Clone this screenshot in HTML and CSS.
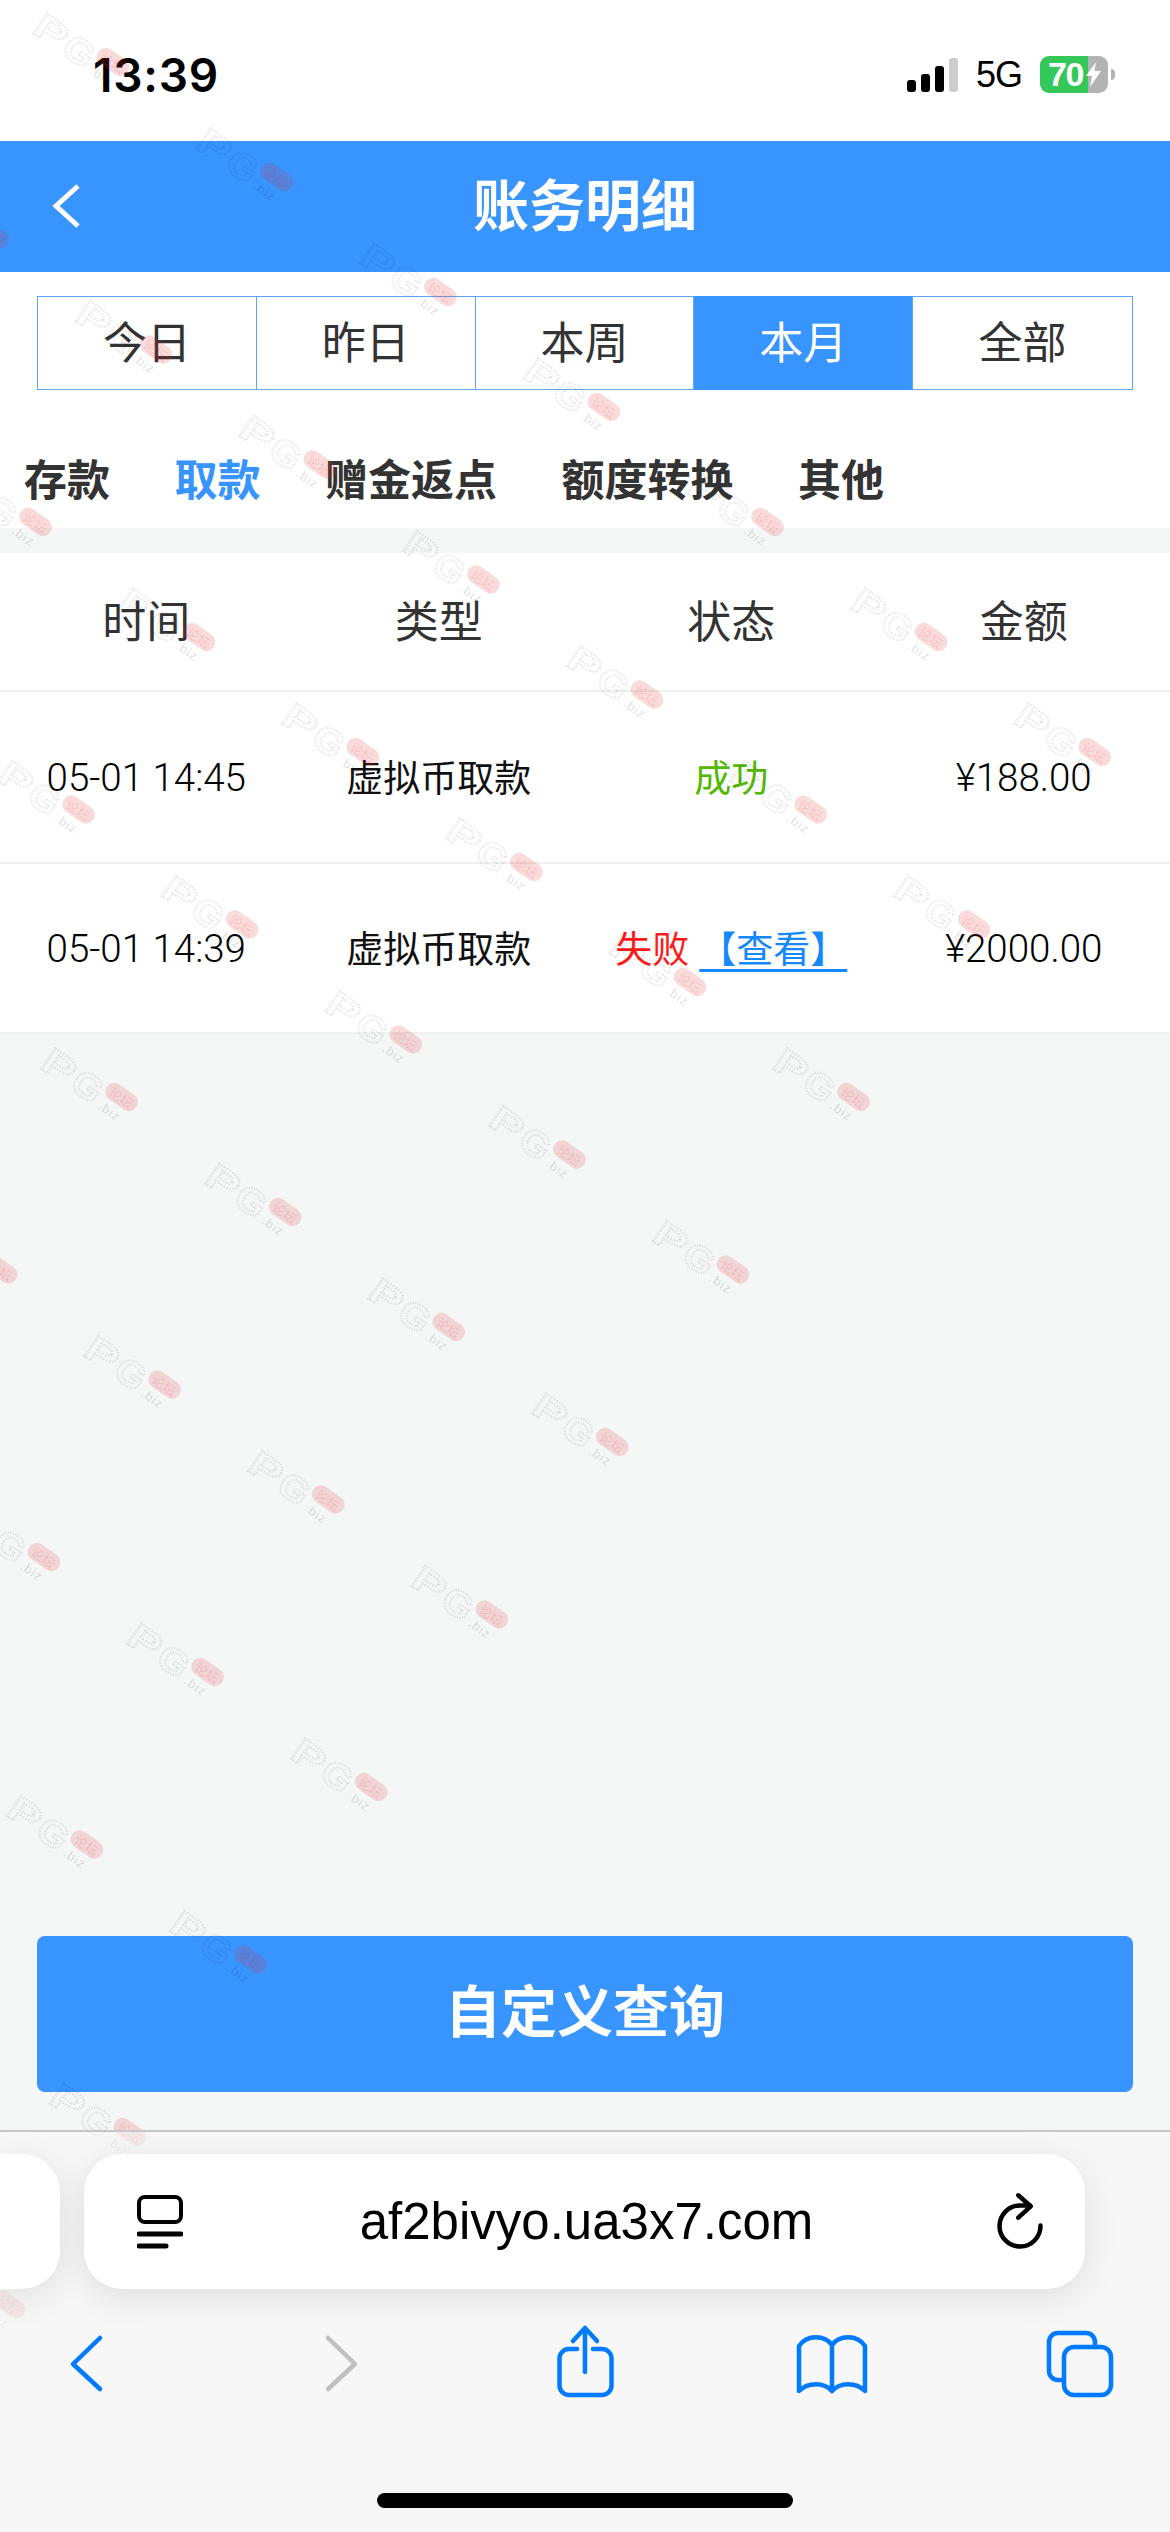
FILE: index.html
```html
<!DOCTYPE html>
<html lang="zh-CN">
<head>
    <meta charset="UTF-8">
    <meta name="viewport" content="width=device-width, initial-scale=1.0">
    <title>账务明细</title>
    <link rel="stylesheet" href="styles.css">
</head>
<body>
    <div class="status">
        <span class="time">13:39</span>
        <div class="status-right">
            <div class="signal">
                <i class="s1"></i><i class="s2"></i><i class="s3"></i><i class="s4"></i>
            </div>
            <span class="net">5G</span>
            <div class="battery">
                <span>70</span>
                <svg class="bolt" viewBox="0 0 15 25"><path d="M10 0 L0 14 H6 L4 25 L15 9 H8.5 Z"/></svg>
            </div>
            <i class="battery-cap"></i>
        </div>
    </div>

    <div class="header">
        <svg class="back" viewBox="0 0 30 46"><path d="M26 3 L4 23 L26 43"/></svg>
        <span>账务明细</span>
    </div>

    <div class="segment-wrap">
        <div class="segment">
            <div class="seg">今日</div>
            <div class="seg">昨日</div>
            <div class="seg">本周</div>
            <div class="seg active">本月</div>
            <div class="seg">全部</div>
        </div>
    </div>

    <div class="types">
        <span>存款</span>
        <span class="active">取款</span>
        <span>赠金返点</span>
        <span>额度转换</span>
        <span>其他</span>
    </div>

    <div class="table">
        <div class="row head">
            <div>时间</div><div>类型</div><div>状态</div><div>金额</div>
        </div>
        <div class="row">
            <div class="num">05-01 14:45</div>
            <div>虚拟币取款</div>
            <div class="ok">成功</div>
            <div class="num">¥188.00</div>
        </div>
        <div class="row last">
            <div class="num">05-01 14:39</div>
            <div>虚拟币取款</div>
            <div class="state"><span class="fail">失败</span><a class="view">【查看】</a></div>
            <div class="num">¥2000.00</div>
        </div>
    </div>

    <div class="query-wrap">
        <button class="query">自定义查询</button>
    </div>

    <div class="toolbar">
        <div class="url-row">
            <div class="url-side"></div>
            <div class="url-bar">
                <svg class="reader" viewBox="0 0 46 54">
                    <rect x="2" y="2" width="42" height="25" rx="6"/>
                    <path d="M2 39 H44 M2 51 H29"/>
                </svg>
                <span class="url">af2bivyo.ua3x7.com</span>
                <svg class="reload" viewBox="0 0 60 60">
                    <path d="M50.5 33.5 A20.5 20.5 0 1 1 30 13.5 H40"/>
                    <path d="M28.3 3.3 L40.7 14.3 L28.3 25.7"/>
                </svg>
            </div>
        </div>
        <div class="nav">
            <svg viewBox="0 0 80 80"><path d="M54 16 L27 42 L54 67"/></svg>
            <svg class="off" viewBox="0 0 80 80"><path d="M33 16 L60 42 L33 67"/></svg>
            <svg viewBox="-2 0 80 80">
                <path d="M32 27 H24 A9.5 9.5 0 0 0 14.5 36.500 V63.500 A9.5 9.5 0 0 0 24 73 H57 A9.500 9.500 0 0 0 66.500 63.500 V36.500 A9.500 9.500 0 0 0 57 27 H48"/>
                <path d="M40 50 V7 M28 19 L40 6 L52 19"/>
            </svg>
            <svg viewBox="0 0 80 80">
                <path d="M40 23 C33 13 15 12 7 24 V69 C16 60 32 60 40 69 C48 60 64 60 73 69 V24 C65 12 47 13 40 23 Z M40 23 V69"/>
            </svg>
            <svg viewBox="0 0 80 80">
                <path d="M55 25 V20 A9 9 0 0 0 46 11 H18 A9 9 0 0 0 9 20 V49 A9 9 0 0 0 18 58 H24"/>
                <rect x="24" y="25" width="47" height="48" rx="10"/>
            </svg>
        </div>
        <div class="home"></div>
    </div>

    <!-- watermark over the page, under the browser toolbar -->
    <svg class="marks" width="1170" height="2532">
        <defs>
            <g id="wm">
                <g transform="rotate(35)">
                    <text class="wm-letter" x="-85" y="23" textLength="33" lengthAdjust="spacingAndGlyphs">P</text>
                    <text class="wm-letter" x="-49" y="23" textLength="30" lengthAdjust="spacingAndGlyphs">G</text>
                    <rect class="wm-blob" x="-18" y="-9" width="36" height="18" rx="9"/>
                    <text class="wm-tag" x="-13" y="6">论坛</text>
                    <text class="wm-biz" x="-14" y="23">.biz</text>
                </g>
            </g>
        </defs>
        <use href="#wm" x="113.2" y="62"/>
        <use href="#wm" x="276.8" y="177"/>
        <use href="#wm" x="440.4" y="292"/>
        <use href="#wm" x="604" y="407"/>
        <use href="#wm" x="767.6" y="522"/>
        <use href="#wm" x="931.2" y="637"/>
        <use href="#wm" x="1094.8" y="752"/>

        <use href="#wm" x="-7.4" y="234.5"/>
        <use href="#wm" x="156.2" y="349.5"/>
        <use href="#wm" x="319.8" y="464.5"/>
        <use href="#wm" x="483.4" y="579.5"/>
        <use href="#wm" x="647" y="694.5"/>
        <use href="#wm" x="810.6" y="809.5"/>
        <use href="#wm" x="974.2" y="924.5"/>

        <use href="#wm" x="35.6" y="522"/>
        <use href="#wm" x="199.2" y="637"/>
        <use href="#wm" x="362.8" y="752"/>
        <use href="#wm" x="526.4" y="867"/>
        <use href="#wm" x="690" y="982"/>
        <use href="#wm" x="853.6" y="1097"/>

        <use href="#wm" x="78.6" y="809.5"/>
        <use href="#wm" x="242.2" y="924.5"/>
        <use href="#wm" x="405.8" y="1039.5"/>
        <use href="#wm" x="569.4" y="1154.5"/>
        <use href="#wm" x="733" y="1269.5"/>

        <use href="#wm" x="121.6" y="1097"/>
        <use href="#wm" x="285.2" y="1212"/>
        <use href="#wm" x="448.8" y="1327"/>
        <use href="#wm" x="612.4" y="1442"/>

        <use href="#wm" x="1" y="1269.5"/>
        <use href="#wm" x="164.6" y="1384.5"/>
        <use href="#wm" x="328.2" y="1499.5"/>
        <use href="#wm" x="491.8" y="1614.5"/>

        <use href="#wm" x="44" y="1557"/>
        <use href="#wm" x="207.6" y="1672"/>
        <use href="#wm" x="371.2" y="1787"/>

        <use href="#wm" x="87" y="1844.5"/>
        <use href="#wm" x="250.6" y="1959.5"/>

        <use href="#wm" x="130" y="2132"/>
        <use href="#wm" x="9.4" y="2304.5"/>
    </svg>
</body>
</html>
```

FILE: styles.css
```css
* {
    margin: 0px;
    padding: 0px;
    box-sizing: border-box;
}
body {
    width: 1170px;
    height: 2532px;
    overflow: hidden;
    position: relative;
    display: flex;
    flex-direction: column;
    background-color: #f5f7f7;
    font-family: "Noto Sans CJK SC", "Liberation Sans", sans-serif;
    color: #333;
}

/* status bar */
.status {
    height: 141px;
    background-color: white;
    display: flex;
    justify-content: space-between;
    align-items: center;
    padding: 8px 55px 0px 93px;
}
.time {
    font-family: Inter, sans-serif;
    font-size: 46px;
    font-weight: 600;
    color: black;
    letter-spacing: 0.8px;
}
.status-right {
    display: flex;
    align-items: center;
}
.signal {
    display: flex;
    align-items: flex-end;
    gap: 5px;
    height: 34px;
    margin-right: 18px;
}
.signal i {
    width: 9px;
    background-color: black;
    border-radius: 3px;
}
.signal .s1 { height: 12px; }
.signal .s2 { height: 18px; }
.signal .s3 { height: 26px; }
.signal .s4 { height: 34px; background-color: #cdcdcd; }
.net {
    font-family: "Liberation Sans", sans-serif;
    font-size: 36px;
    letter-spacing: -1px;
    color: black;
    margin-right: 18px;
}
.battery {
    width: 68px;
    height: 37px;
    border-radius: 9px;
    background: linear-gradient(90deg, #34c759 48px, #b3b3b3 48px);
    color: white;
    font-family: "Liberation Sans", sans-serif;
    font-weight: 700;
    font-size: 34px;
    line-height: 37px;
    letter-spacing: -1.5px;
    padding-left: 8px;
    position: relative;
}
.bolt {
    position: absolute;
    left: 46px;
    top: 6px;
    width: 15px;
    height: 25px;
    fill: white;
}
.battery-cap {
    width: 4px;
    height: 11px;
    margin-left: 3px;
    background-color: #b3b3b3;
    border-radius: 0px 4px 4px 0px;
}

/* page header */
.header {
    height: 131px;
    background-color: #3894ff;
    color: white;
    font-size: 56px;
    font-weight: 700;
    display: flex;
    align-items: center;
    justify-content: center;
    padding-bottom: 10px;
    position: relative;
}
.back {
    position: absolute;
    left: 52px;
    top: 42px;
    width: 30px;
    height: 46px;
    fill: none;
    stroke: white;
    stroke-width: 5;
}

/* date filter */
.segment-wrap {
    background-color: white;
    padding: 24px 37px 0px;
}
.segment {
    height: 94px;
    display: grid;
    grid-template-columns: repeat(5, 1fr);
    border: 1px solid #5ba6fb;
}
.seg {
    display: flex;
    align-items: center;
    justify-content: center;
    font-size: 44px;
    padding-bottom: 6px;
    border-right: 1px solid #5ba6fb;
}
.seg:last-child {
    border-right: none;
}
.seg.active {
    background-color: #3894ff;
    color: white;
    margin: -1px 0px;
}

/* record type tabs */
.types {
    height: 138px;
    background-color: white;
    padding: 57px 0px 21px 24px;
    display: flex;
    gap: 64.5px;
    font-size: 43px;
    font-weight: 700;
    line-height: 60px;
}
.types .active {
    color: #3894ff;
}

/* records */
.table {
    margin-top: 25px;
    background-color: white;
}
.row {
    height: 172px;
    display: grid;
    grid-template-columns: repeat(4, 1fr);
    align-items: center;
    text-align: center;
    border-bottom: 2px solid #f0f0f0;
    padding-bottom: 3px;
    font-size: 37px;
    color: #111;
}
.row.head {
    height: 139px;
    padding-bottom: 6px;
    font-size: 44px;
    color: #333;
}
.row.last {
    height: 170px;
}
.num {
    font-family: Roboto, "Liberation Sans", sans-serif;
    font-size: 38.5px;
    font-weight: 300;
    color: black;
    margin-top: 3px;
}
.ok {
    color: #52b800;
}
.state {
    white-space: nowrap;
}
.fail {
    color: #ff1a1a;
    margin-right: 10px;
}
.view {
    color: #1488fc;
    text-decoration: underline;
    text-decoration-thickness: 3px;
    text-decoration-skip-ink: none;
    text-underline-offset: 6px;
}

/* query button */
.query-wrap {
    margin-top: auto;
    padding: 0px 37px 38px;
}
.query {
    display: block;
    width: 100%;
    height: 156px;
    border: none;
    border-radius: 8px;
    padding-bottom: 14px;
    background-color: #3894ff;
    color: white;
    font-family: inherit;
    font-size: 56px;
    font-weight: 700;
}

/* safari toolbar */
.toolbar {
    height: 402px;
    position: relative;
    z-index: 2;
    background-color: rgba(248, 248, 249, 0.55);
    border-top: 2px solid #c6c6c6;
    padding-top: 22px;
}
.url-row {
    display: flex;
    gap: 24px;
}
.url-side {
    width: 60px;
    height: 135px;
    background-color: white;
    border-radius: 0px 38px 38px 0px;
    box-shadow: 0px 8px 34px rgba(0, 0, 0, 0.1);
}
.url-bar {
    width: 1001px;
    height: 135px;
    background-color: white;
    border-radius: 38px;
    box-shadow: 0px 8px 34px rgba(0, 0, 0, 0.1);
    display: flex;
    align-items: center;
    justify-content: space-between;
    padding: 0px 35px 0px 53px;
}
.url {
    font-family: "Liberation Sans", sans-serif;
    font-size: 51px;
    color: black;
}
.reader {
    width: 46px;
    height: 54px;
    fill: none;
    stroke: black;
    stroke-width: 4;
}
.reader path {
    stroke-linecap: round;
    stroke-width: 5;
}
.reload {
    width: 60px;
    height: 60px;
    fill: none;
    stroke: black;
    stroke-width: 4.500;
    stroke-linecap: round;
    stroke-linejoin: round;
}
.nav {
    display: flex;
    justify-content: space-between;
    padding: 33px 50px 0px 46px;
}
.nav svg {
    width: 80px;
    height: 80px;
    fill: none;
    stroke: #007aff;
    stroke-width: 4.500;
    stroke-linecap: round;
    stroke-linejoin: round;
}
.nav .off {
    stroke: #c0c0c0;
}
.home {
    position: absolute;
    left: 377px;
    top: 361px;
    width: 416px;
    height: 15px;
    background-color: black;
    border-radius: 8px;
}

/* watermark */
.marks {
    position: absolute;
    left: 0px;
    top: 0px;
    z-index: 1;
    pointer-events: none;
}
.wm-letter {
    font-family: "Liberation Sans", sans-serif;
    font-size: 36px;
    font-weight: 700;
    fill: none;
    stroke: rgba(0, 0, 0, 0.11);
    stroke-width: 2.4;
    stroke-dasharray: 1.2 1.2;
}
.wm-blob {
    fill: rgba(225, 40, 50, 0.17);
}
.wm-tag {
    font-size: 13px;
    fill: rgba(225, 40, 50, 0.16);
}
.wm-biz {
    font-family: "Liberation Sans", sans-serif;
    font-size: 13px;
    letter-spacing: 1px;
    fill: rgba(0, 0, 0, 0.14);
}
```
